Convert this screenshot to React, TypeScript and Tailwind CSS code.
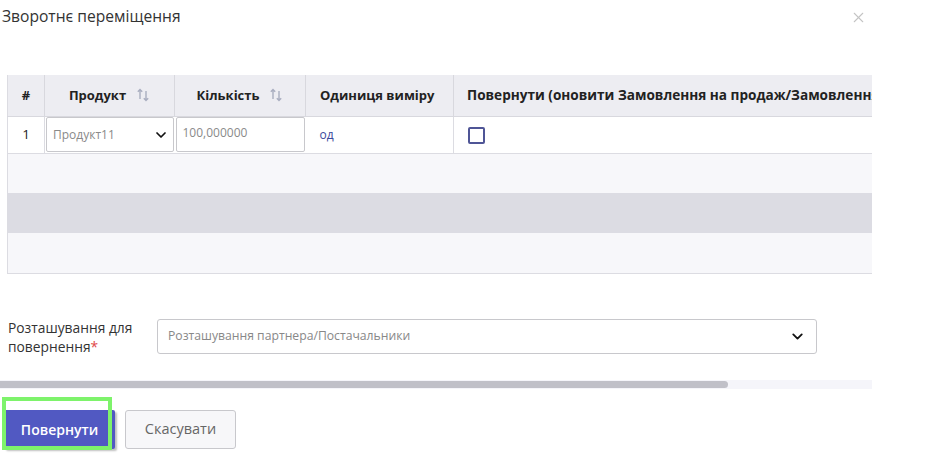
import { ChevronDown, X } from "lucide-react";

function SortIcon() {
  return (
    <svg width="14" height="16" viewBox="0 0 14 16" className="ml-[10px] inline-block" fill="none">
      <path d="M4 12V2.5M1.8 4.7L4 2.5l2.2 2.2" stroke="#a9aec0" strokeWidth="1.4" />
      <path d="M10 4v9.5M7.8 11.3L10 13.5l2.2-2.2" stroke="#a9aec0" strokeWidth="1.4" />
    </svg>
  );
}

export default function App() {
  return (
    <div
      className="relative h-[456px] w-[931px] overflow-hidden bg-white text-[#333]"
      style={{ fontFamily: '"Open Sans", "Noto Sans", sans-serif' }}
    >
      {/* Title */}
      <div className="flex items-start justify-between pr-[64px] pl-[2px] pt-[5px]">
        <h1 className="text-[15.6px] leading-[22px] text-[#333]">Зворотнє переміщення</h1>
        <X size={17} strokeWidth={1.5} className="mt-[4px] text-[#c4c4c4]" />
      </div>

      {/* Scrollable body */}
      <div className="mt-[48px] w-[872px] overflow-hidden">
        <div className="w-[1044px] pl-[7px]">
          <table className="w-[1037px] table-fixed border-collapse border-l border-[#dcdce2] text-[13px]">
            <colgroup>
              <col className="w-[37px]" />
              <col className="w-[130px]" />
              <col className="w-[131px]" />
              <col className="w-[148px]" />
              <col />
            </colgroup>
            <thead>
              <tr className="h-[41px] bg-[#ededf2] font-bold text-[#222]">
                <th className="border-r border-b border-[#d8d8de] text-center">#</th>
                <th className="border-r border-b border-[#d8d8de] text-center">
                  <span className="inline-flex items-center">Продукт<SortIcon /></span>
                </th>
                <th className="border-r border-b border-[#d8d8de] text-center">
                  <span className="inline-flex items-center">Кількість<SortIcon /></span>
                </th>
                <th className="border-r border-b border-[#d8d8de] pl-[14px] text-left">Одиниця виміру</th>
                <th className="border-b border-[#d8d8de] whitespace-nowrap pl-[13px] text-left text-[13.6px]">
                  Повернути (оновити Замовлення на продаж/Замовлення на купівлю)
                </th>
              </tr>
            </thead>
            <tbody>
              <tr className="h-[37px] bg-white">
                <td className="border-r border-b border-[#dcdce2] text-center text-[13.5px] text-[#222]">1</td>
                <td className="border-b border-[#dcdce2] p-0 px-[1px] align-middle">
                  <div className="flex h-[35px] items-center justify-between rounded-[2px] border border-[#c8c8cc] bg-white pr-[4px] pl-[6px] text-[12px] text-[#8a8a8a]">
                    <span>Продукт11</span>
                    <ChevronDown size={16} strokeWidth={2.6} className="text-[#111]" />
                  </div>
                </td>
                <td className="border-b border-[#dcdce2] p-0 px-[1px] align-middle">
                  <div className="flex h-[35px] items-start rounded-[2px] border border-[#c8c8cc] bg-white pt-[6px] pl-[6px] text-[12px] text-[#8a8a8a]">
                    100,000000
                  </div>
                </td>
                <td className="border-r border-b border-[#dcdce2] pl-[14px] text-[12px] text-[#3b4a9b]">од</td>
                <td className="border-b border-[#dcdce2] pl-[14px]">
                  <div className="mt-[2px] h-[17px] w-[17px] rounded-[2px] border-2 border-[#4f5596]" />
                </td>
              </tr>
              <tr className="h-[40px] bg-[#f7f7fa]">
                <td colSpan={5} />
              </tr>
              <tr className="h-[40px] bg-[#dcdce3]">
                <td colSpan={5} />
              </tr>
              <tr className="h-[40px] border-b border-[#dcdce2] bg-[#f7f7fa]">
                <td colSpan={5} />
              </tr>
            </tbody>
          </table>

          {/* Location row */}
          <div className="mt-[44px] flex items-center">
            <label className="w-[150px] pl-[1px] text-[13.8px] leading-[19px] text-[#333]">
              Розташування для
              <br />
              повернення<span className="text-[#e04848]">*</span>
            </label>
            <div className="flex h-[35px] w-[660px] items-center justify-between rounded-[3px] border border-[#c8c8cc] bg-white pr-[10px] pl-[10px] text-[12.2px] text-[#888]">
              <span>Розташування партнера/Постачальники</span>
              <ChevronDown size={17} strokeWidth={2.6} className="text-[#111]" />
            </div>
          </div>
        </div>
      </div>

      {/* Fake horizontal scrollbar */}
      <div className="mt-[24px] h-[9px] w-[872px] bg-[#f5f5fa]">
        <div className="h-[7px] w-[728px] translate-y-[1px] rounded-r-full bg-[#c0c0c8]" />
      </div>

      {/* Actions */}
      <div className="mt-[21px] flex items-center gap-[10px] pl-[4px]">
        <div className="relative">
          <button className="h-[39px] w-[111px] rounded-[2px] bg-[#5159c2] text-[14px] font-semibold text-white shadow-[2px_2px_2px_rgba(0,0,0,0.25)]">
            Повернути
          </button>
          <div className="absolute top-[-13px] left-[-2px] h-[53px] w-[110px] border-4 border-[#7ef36b]" />
          <div className="absolute top-[-9px] left-[2px] h-[9px] w-[102px] bg-white" />
        </div>
        <button className="h-[39px] w-[111px] rounded-[3px] border border-[#c8c8cc] bg-[#f7f7f9] text-[14.5px] text-[#666]">
          Скасувати
        </button>
      </div>
    </div>
  );
}
